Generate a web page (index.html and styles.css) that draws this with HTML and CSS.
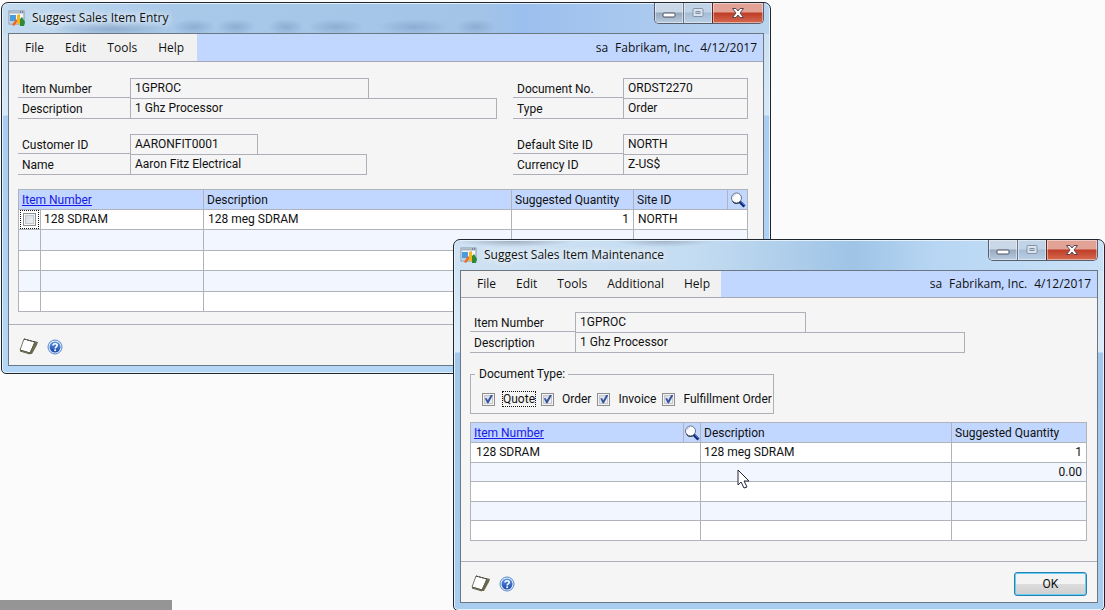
FILE: index.html
```html
<!DOCTYPE html>
<html lang="en">
<head>
<meta charset="utf-8">
<title>Suggest Sales Item</title>
<link rel="stylesheet" href="styles.css">
</head>
<body>
<svg class="defs" aria-hidden="true">
  <defs>
    <linearGradient id="ball" x1="0" y1="0" x2="0" y2="1"><stop offset="0" stop-color="#5f97e4"/><stop offset="1" stop-color="#1747a8"/></linearGradient>
    <symbol id="app" viewBox="0 0 18 17">
      <rect x="1" y="1" width="15" height="13" fill="#f2f6fa" stroke="#8796a8"/>
      <path d="M1 2.500h15" stroke="#a9b6c5" stroke-width="2"/>
      <path d="M12 2h1M14 2h1" stroke="#445"/>
      <rect x="2" y="5" width="6" height="6" fill="#4c9be0"/>
      <path d="M2 12h5" stroke="#7fa9cf"/>
      <path d="M4 15l4-6 2 2-4 5z" fill="#ee6b22"/>
      <path d="M9 5l3-1v11l-3-2z" fill="#f6b51d"/>
      <path d="M12 9l2-2 3 5-1 4-4 0z" fill="#2f8a35"/>
    </symbol>
    <symbol id="note" viewBox="0 0 20 17">
      <path d="M15 3l4 1-1 3-5 9-3 0 5-9z" fill="#6c6b4d"/>
      <path d="M5 1l11 3-5 11-10-3z" fill="#fff" stroke="#77766a"/>
      <path d="M5 1l11 3" stroke="#333" stroke-dasharray="2 1"/>
      <path d="M1 12l10 3 5-11" fill="none" stroke="#5b5a43"/>
      <path d="M1 13l10 3" stroke="#5b5a43"/>
    </symbol>
    <symbol id="help" viewBox="0 0 16 16">
      <circle cx="8" cy="8" r="7" fill="#e8f1fc" stroke="#5688cc"/>
      <circle cx="8" cy="8" r="5.500" fill="url(#ball)"/>
      <path d="M6 6.500C6 4.200 10.300 4.200 10.200 6.500C10.100 7.900 8.200 7.800 8.200 9.500" fill="none" stroke="#fff" stroke-width="1.600"/>
      <rect x="7.300" y="10.400" width="1.800" height="1.700" fill="#fff"/>
    </symbol>
    <symbol id="lens" viewBox="0 0 16 16">
      <circle cx="6.500" cy="6" r="5" fill="#fff" stroke="#66708a"/>
      <path d="M3 5a4 4 0 0 1 3-3" fill="none" stroke="#b9cdf0"/>
      <path d="M2.500 9.500a5 5 0 0 0 8 0" fill="none" stroke="#222"/>
      <path d="M10 10l4.500 4.500" stroke="#102a7a" stroke-width="3"/>
      <path d="M11 10l3.500 3.500" stroke="#3f74d8"/>
    </symbol>
    <symbol id="min" viewBox="0 0 14 14"><rect x="1" y="7" width="12" height="4" rx="1" fill="#fff" stroke="#4c5261"/></symbol>
    <symbol id="max" viewBox="0 0 14 14"><rect x="2" y="2.500" width="10" height="8" rx="1" fill="#dbe4ee" stroke="#8493a5"/><rect x="5" y="5.500" width="4" height="2" fill="#b4c5d8" stroke="#8493a5"/></symbol>
    <symbol id="close" viewBox="0 0 14 14"><path d="M1.500 2.500h3.500l2 2.500 2-2.500h3.500L9 7l3.500 4.500H9L7 9l-2 2.500H1.500L5 7z" fill="#fff" stroke="#5b4650"/></symbol>
  </defs>
</svg>

<main class="desktop">
  <section class="window entry" aria-label="Suggest Sales Item Entry">
    <header class="titlebar">
      <svg class="app-icon"><use href="#app"/></svg>
      <h1 class="title">Suggest Sales Item Entry</h1>
      <div class="controls">
        <button class="ctl ctl-min" aria-label="Minimize"><svg><use href="#min"/></svg></button>
        <button class="ctl ctl-max" aria-label="Maximize" disabled><svg><use href="#max"/></svg></button>
        <button class="ctl ctl-close" aria-label="Close"><svg><use href="#close"/></svg></button>
      </div>
    </header>
    <div class="client">
      <div class="menubar">
        <nav class="menu"><button>File</button><button>Edit</button><button>Tools</button><button>Help</button></nav>
        <div class="session"><span>sa</span><span>Fabrikam, Inc.</span><span>4/12/2017</span></div>
      </div>
      <div class="content">
        <div class="forms">
          <div class="group">
            <div class="field"><label for="e-item">Item Number</label><input id="e-item" class="w-item" value="1GPROC" readonly></div>
            <div class="field"><label for="e-desc">Description</label><input id="e-desc" class="w-desc" value="1 Ghz Processor" readonly></div>
          </div>
          <div class="group">
            <div class="field"><label for="e-doc">Document No.</label><input id="e-doc" class="w-side" value="ORDST2270" readonly></div>
            <div class="field"><label for="e-type">Type</label><input id="e-type" class="w-side" value="Order" readonly></div>
          </div>
          <div class="group">
            <div class="field"><label for="e-cust">Customer ID</label><input id="e-cust" class="w-cust" value="AARONFIT0001" readonly></div>
            <div class="field"><label for="e-name">Name</label><input id="e-name" class="w-name" value="Aaron Fitz Electrical" readonly></div>
          </div>
          <div class="group">
            <div class="field"><label for="e-site">Default Site ID</label><input id="e-site" class="w-side" value="NORTH" readonly></div>
            <div class="field"><label for="e-cur">Currency ID</label><input id="e-cur" class="w-side" value="Z-US$" readonly></div>
          </div>
        </div>
        <table class="grid">
          <colgroup><col class="c-check"><col class="c-item"><col><col class="c-qty"><col class="c-site"><col class="c-lens"></colgroup>
          <thead><tr><th colspan="2"><a href="#">Item Number</a></th><th>Description</th><th>Suggested Quantity</th><th>Site ID</th><th class="lens"><button aria-label="Look up site"><svg><use href="#lens"/></svg></button></th></tr></thead>
          <tbody>
            <tr><td class="pick"><input type="checkbox" class="box" aria-label="Select 128 SDRAM"></td><td>128 SDRAM</td><td>128 meg SDRAM</td><td class="num">1</td><td colspan="2">NORTH</td></tr>
            <tr><td></td><td></td><td></td><td></td><td colspan="2"></td></tr>
            <tr><td></td><td></td><td></td><td></td><td colspan="2"></td></tr>
            <tr><td></td><td></td><td></td><td></td><td colspan="2"></td></tr>
            <tr><td></td><td></td><td></td><td></td><td colspan="2"></td></tr>
          </tbody>
        </table>
      </div>
      <footer class="footer">
        <button class="icon" aria-label="Note"><svg class="note"><use href="#note"/></svg></button>
        <button class="icon" aria-label="Help"><svg class="help"><use href="#help"/></svg></button>
      </footer>
    </div>
  </section>

  <section class="window maint" aria-label="Suggest Sales Item Maintenance">
    <header class="titlebar">
      <svg class="app-icon"><use href="#app"/></svg>
      <h1 class="title">Suggest Sales Item Maintenance</h1>
      <div class="controls">
        <button class="ctl ctl-min" aria-label="Minimize"><svg><use href="#min"/></svg></button>
        <button class="ctl ctl-max" aria-label="Maximize" disabled><svg><use href="#max"/></svg></button>
        <button class="ctl ctl-close" aria-label="Close"><svg><use href="#close"/></svg></button>
      </div>
    </header>
    <div class="client">
      <div class="menubar">
        <nav class="menu"><button>File</button><button>Edit</button><button>Tools</button><button>Additional</button><button>Help</button></nav>
        <div class="session"><span>sa</span><span>Fabrikam, Inc.</span><span>4/12/2017</span></div>
      </div>
      <div class="content">
        <div class="group">
          <div class="field"><label for="m-item">Item Number</label><input id="m-item" class="w-item" value="1GPROC" readonly></div>
          <div class="field"><label for="m-desc">Description</label><input id="m-desc" class="w-desc" value="1 Ghz Processor" readonly></div>
        </div>
        <fieldset class="types">
          <legend>Document Type:</legend>
          <div class="checks">
            <input type="checkbox" class="box" id="t-quote" checked><label for="t-quote" class="focused">Quote</label>
            <input type="checkbox" class="box" id="t-order" checked><label for="t-order">Order</label>
            <input type="checkbox" class="box" id="t-inv" checked><label for="t-inv">Invoice</label>
            <input type="checkbox" class="box" id="t-ful" checked><label for="t-ful">Fulfillment Order</label>
          </div>
        </fieldset>
        <table class="grid">
          <colgroup><col class="c-item"><col class="c-lens"><col><col class="c-qty"></colgroup>
          <thead><tr><th><a href="#">Item Number</a></th><th class="lens"><button aria-label="Look up item"><svg><use href="#lens"/></svg></button></th><th>Description</th><th>Suggested Quantity</th></tr></thead>
          <tbody>
            <tr><td colspan="2" class="inset">128 SDRAM</td><td>128 meg SDRAM</td><td class="num">1</td></tr>
            <tr><td colspan="2"></td><td></td><td class="num">0.00</td></tr>
            <tr><td colspan="2"></td><td></td><td></td></tr>
            <tr><td colspan="2"></td><td></td><td></td></tr>
            <tr><td colspan="2"></td><td></td><td></td></tr>
          </tbody>
        </table>
      </div>
      <footer class="footer">
        <button class="icon" aria-label="Note"><svg class="note"><use href="#note"/></svg></button>
        <button class="icon" aria-label="Help"><svg class="help"><use href="#help"/></svg></button>
        <button class="ok">OK</button>
      </footer>
    </div>
  </section>

  <svg class="pointer" viewBox="0 0 13 20" aria-hidden="true"><path d="M1 1v15l3-3 3 6 3-1-3-6h5z" fill="#fff" stroke="#222638"/></svg>
  <div class="strip"></div>
</main>
</body>
</html>
```

FILE: styles.css
```css
* { box-sizing: border-box; }

body {
  margin: 0;
  background: #fbfbfb;
  color: #111;
  font: 12px/14px Roboto, "Liberation Sans", sans-serif;
}

button, input { font: inherit; color: inherit; margin: 0; }
button { border: 0; padding: 0; background: none; }
svg { display: block; }
.defs { position: absolute; width: 0; height: 0; }

.desktop { position: relative; min-height: 100vh; overflow: hidden; }

/* Windows */
.window {
  position: absolute;
  padding: 0 6px 7px;
  border: 1px solid #20262e;
  border-radius: 7px 7px 5px 5px;
  box-shadow: inset 0 0 0 1px #e3f1fc;
}
.entry {
  top: 2px; left: 1px; right: 334px;
  background:
    radial-gradient(ellipse 60px 8px at 110px 26px, #8fadcf, transparent),
    radial-gradient(ellipse 22px 8px at 192px 24px, #8dadd2, transparent),
    radial-gradient(ellipse 20px 8px at 234px 24px, #8dadd2, transparent),
    radial-gradient(ellipse 18px 8px at 284px 24px, #8dadd2, transparent),
    radial-gradient(ellipse 28px 8px at 334px 24px, #8dadd2, transparent),
    radial-gradient(ellipse 36px 8px at 412px 24px, #8dadd2, transparent),
    radial-gradient(ellipse 20px 8px at 474px 24px, #8dadd2, transparent),
    linear-gradient(90deg, #c5dcf0 0, #a9c9e9 170px, #a3c4e7 480px, #9bbfee 520px, #b9d3ee 100%) 0 0 / 100% 31px no-repeat,
    linear-gradient(#c8ddf0 0, #d6e8f8 112px, #a9cdf0 113px, #b4d7f7 100%);
}
.maint {
  top: 239px; left: 453px; right: 0;
  background:
    radial-gradient(ellipse 60px 6px at 60px 1px, #a3afbf, transparent),
    radial-gradient(ellipse 50px 6px at 210px 1px, #a3b3c8, transparent),
    linear-gradient(90deg, #cfe2f3 0, #c4dcf1 240px, #9fc4e6 400px, #b7d6f3 480px, #c9e1f7 100%) 0 0 / 100% 31px no-repeat,
    linear-gradient(#cfe3f5 0, #dcebf8 112px, #a3c7ea 113px, #a9cdef 100%);
}

.titlebar {
  display: flex;
  align-items: flex-start;
  height: 30px;
  font: 12px/16px "Open Sans", "Noto Sans", sans-serif;
}
.app-icon { width: 18px; height: 17px; margin: 7px 6px 0 0; }
.title {
  flex: 1;
  margin: 7px 0 0;
  font: inherit;
  text-shadow: 0 0 6px #fff, 0 0 8px #fff;
}

.controls {
  display: flex;
  height: 21px;
  border: 1px solid #565f70;
  border-top: 0;
  border-radius: 0 0 5px 5px;
  overflow: hidden;
}
.ctl {
  display: flex;
  align-items: center;
  justify-content: center;
  box-shadow: inset 0 0 0 1px rgba(255, 255, 255, .45);
}
.ctl svg { width: 14px; height: 14px; }
.ctl-min { width: 29px; background: linear-gradient(#c9d7e6 45%, #97a9bf 50%, #b9cbde); border-right: 1px solid #6c788a; }
.ctl-max { width: 28px; background: linear-gradient(#c0d3e7 45%, #a6bcd5 50%, #bad0e6); }
.ctl-close { width: 51px; background: linear-gradient(#e2a295 45%, #bf3d27 50%, #d56a50); border-left: 1px solid #5e2720; }

.client { border: 1px solid #6d7683; background: #f5f5f5; }

.menubar {
  display: flex;
  justify-content: space-between;
  height: 28px;
  border-bottom: 1px solid #a3a8b4;
  background: #c2d7ff;
  font: 12px/16px "Open Sans", "Noto Sans", sans-serif;
}
.menu { display: flex; gap: 21px; padding: 0 13px 0 16px; background: #f1f1f1; }
.session { display: flex; align-items: center; gap: 7px; padding-right: 6px; }
.maint .menubar { height: 27px; }
.maint .menu { gap: 20px; padding-right: 11px; }

/* Fields */
.entry .content { padding: 16px 15px 12px 9px; }
.maint .content { padding: 14px 10px 20px 9px; }

.forms {
  display: grid;
  grid-template-columns: 1fr auto;
  row-gap: 15px;
  margin-bottom: 14px;
}
.field { display: flex; height: 20px; }
.group .field:last-child { height: 21px; }
.field label {
  width: 112px;
  padding: 4px 0 0 4px;
  border-bottom: 1px solid #afafb9;
}
.field input {
  height: 21px;
  padding: 0 4px 1px;
  border: 1px solid #afafb9;
  border-radius: 0;
  background: transparent;
  outline: 0;
}
.group:nth-child(even) label { width: 110px; }
.field:last-child label { height: 21px; }
.maint .field label { width: 105px; }
.w-item { width: 239px; }
.w-desc { width: 367px; }
.w-cust { width: 128px; }
.w-name { width: 237px; }
.w-side { width: 125px; }
.maint .w-item { width: 231px; }
.maint .w-desc { width: 390px; }

.types {
  width: fit-content;
  margin: 13px 0 8px;
  padding: 10px 1px 7px 11px;
  border: 1px solid #afafb9;
}
.types legend { margin-left: -7px; padding: 0 3px 0 4px; line-height: 16px; }
.checks { display: flex; align-items: center; line-height: 14px; }
.checks label { margin: 0 6px 0 8px; }
.checks label:last-child { margin-right: 0; }
.checks .focused { outline: 1px dotted #111; }

.box {
  appearance: none;
  position: relative;
  flex: none;
  width: 13px;
  height: 13px;
  border: 1px solid #8e8f8f;
  background: linear-gradient(135deg, #cfd4da, #f8f8f8);
  box-shadow: inset 0 0 0 1px #f4f4f4, inset 0 0 0 2px #c4c8ce;
}
.box:checked::after {
  content: "";
  position: absolute;
  inset: 1px;
  background: #3654a0;
  clip-path: polygon(10% 45%, 28% 38%, 42% 65%, 78% 0, 98% 8%, 50% 98%, 35% 98%);
}

/* Tables */
.grid {
  width: 100%;
  table-layout: fixed;
  border-collapse: collapse;
  border: 1px solid #a7a9b1;
}
.grid th, .grid td {
  height: 20px;
  padding: 0 4px;
  border: 1px solid #b1b3bb;
  text-align: left;
  font-weight: 400;
  line-height: 14px;
  white-space: nowrap;
}
.grid th { background: #c2d7ff; padding: 1px 3px 0; }
.grid td { background: #fff; padding-bottom: 1px; }
.grid td:not(.pick) { padding-left: 4px; }
.grid td:nth-child(2) { padding-left: 3px; }
.grid tr:nth-child(even) td { background: #f1f6ff; }
.entry .grid tr:nth-child(even) td { height: 21px; }
.maint .grid tr:nth-child(even) td { height: 19px; }
.grid a { color: #1a1ae6; text-decoration: underline; }
.grid .num { text-align: right; }
.grid td.inset { padding-left: 5px; }
.grid .lens { padding: 0; }
.entry .lens { border-left-color: #9fb0d0; }
.lens button { display: block; margin: 0 auto; }
.lens svg { width: 16px; height: 16px; }
.grid .pick { padding: 0; }
.pick .box { display: block; margin: 0 auto; outline: 1px dotted #111; outline-offset: 2px; }
.c-check { width: 22px; }
.c-item { width: 163px; }
.c-qty { width: 122px; }
.c-site { width: 94px; }
.c-lens { width: 20px; }
.maint .c-item { width: 213px; }
.maint .c-lens { width: 17px; }
.maint .c-qty { width: 135px; }

.footer {
  display: flex;
  align-items: center;
  gap: 8px;
  height: 41px;
  padding: 3px 10px 0;
  border-top: 1px solid #afafb9;
}
.note { width: 20px; height: 17px; }
.help { width: 16px; height: 16px; }
.ok {
  width: 73px;
  height: 24px;
  margin-left: auto;
  border: 1px solid #2d7fb0;
  border-radius: 3px;
  background: linear-gradient(#f3f3f3 48%, #dcdcdc 52%, #cfcfcf);
  box-shadow: inset 0 0 0 1px #5fd0f5;
}

.pointer { position: absolute; left: 737px; top: 469px; width: 13px; height: 20px; }
.strip { position: absolute; left: 0; bottom: 0; width: 172px; height: 10px; background: #959595; }
```
